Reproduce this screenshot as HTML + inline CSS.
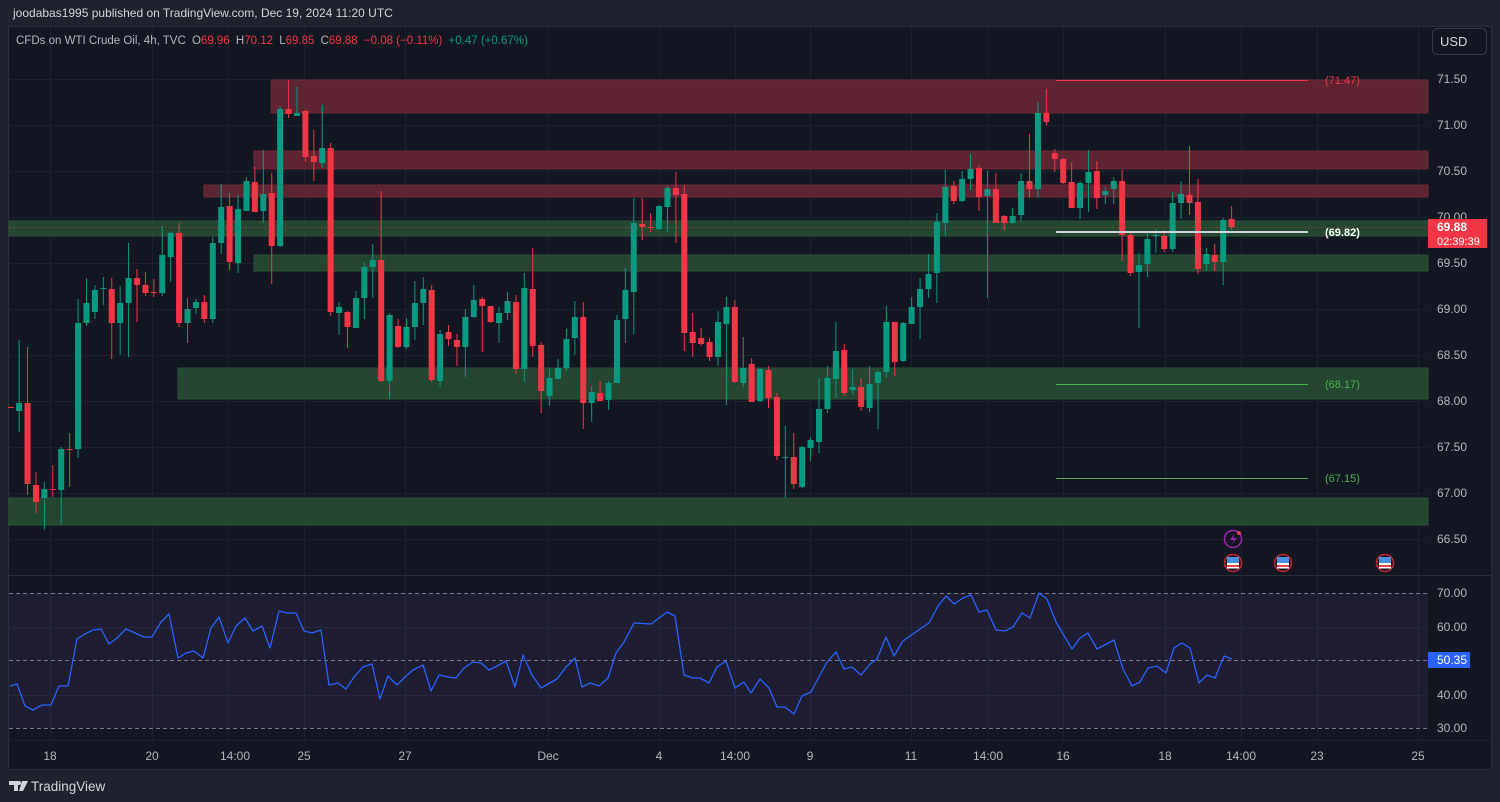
<!DOCTYPE html>
<html><head><meta charset="utf-8"><style>
html,body{margin:0;padding:0;background:#1e222d;width:1500px;height:802px;overflow:hidden;font-family:"Liberation Sans",sans-serif}
svg{position:absolute;left:0;top:0}
</style></head><body>
<svg id="s" width="1500" height="802" xmlns="http://www.w3.org/2000/svg" font-family="Liberation Sans, sans-serif">
<rect x="0" y="0" width="1500" height="802" fill="#1e222d"/>
<rect x="8.5" y="26.5" width="1483" height="743" fill="#131722" stroke="#2a2e39"/>
<rect x="1428" y="27" width="63" height="742" fill="#131722"/>
<line x1="9" y1="575.5" x2="1491" y2="575.5" stroke="#2a2e39"/>
<line x1="9" y1="740.5" x2="1491" y2="740.5" stroke="#2a2e39" stroke-opacity="0.5"/>
<g id="grid" stroke="#1e2230" stroke-width="1"></g>
<g id="zones"></g>
<rect x="9" y="593" width="1419" height="135" fill="#7e57c2" fill-opacity="0.1"/>
<g stroke="#787b86" stroke-dasharray="4,3" stroke-width="1">
<line x1="9" y1="593.5" x2="1428" y2="593.5"/><line x1="9" y1="660.5" x2="1428" y2="660.5"/><line x1="9" y1="728.5" x2="1428" y2="728.5"/>
</g>
<line x1="9" y1="227.5" x2="1428" y2="227.5" stroke="#f23645" stroke-dasharray="1,3" stroke-opacity="0.8"/>
<g id="candles"></g>
<polyline id="rsi" fill="none" stroke="#2962ff" stroke-width="1.3" stroke-linejoin="round"/>
<line x1="1056" y1="80.5" x2="1308" y2="80.5" stroke="#f23645"/>
<line x1="1056" y1="232" x2="1308" y2="232" stroke="#d1d4dc" stroke-width="2"/>
<line x1="1056" y1="384.5" x2="1308" y2="384.5" stroke="#4caf50"/>
<line x1="1056" y1="478.5" x2="1308" y2="478.5" stroke="#4caf50"/>
<g font-size="11">
<text x="1325" y="84" fill="#f23645">(71.47)</text>
<text x="1325" y="236" fill="#ffffff" font-weight="bold">(69.82)</text>
<text x="1325" y="388" fill="#4caf50">(68.17)</text>
<text x="1325" y="482" fill="#4caf50">(67.15)</text>
</g>
<text x="13" y="17" fill="#d1d4dc" font-size="12">joodabas1995 published on TradingView.com, Dec 19, 2024 11:20 UTC</text>
<text x="16" y="44" font-size="11.5" fill="#b2b5be">CFDs on WTI Crude Oil, 4h, TVC <tspan dx="3">O</tspan><tspan fill="#f23645">69.96</tspan> <tspan dx="3">H</tspan><tspan fill="#f23645">70.12</tspan> <tspan dx="3">L</tspan><tspan fill="#f23645">69.85</tspan> <tspan dx="3">C</tspan><tspan fill="#f23645">69.88</tspan> <tspan dx="3" fill="#f23645">−0.08 (−0.11%)</tspan> <tspan dx="3" fill="#089981">+0.47 (+0.67%)</tspan></text>
<rect x="1432.5" y="28.5" width="54" height="26" rx="5" fill="#131722" stroke="#363a45"/>
<text x="1440" y="46" fill="#d1d4dc" font-size="13">USD</text>
<g id="paxis" font-size="12" fill="#b2b5be"></g>
<rect x="1428" y="219" width="59" height="29" fill="#f23645"/>
<text x="1437" y="231" fill="#fff" font-size="12" font-weight="bold">69.88</text>
<text x="1437" y="245" fill="#fff" font-size="11">02:39:39</text>
<g font-size="12" fill="#b2b5be">
<text x="1437" y="597">70.00</text><text x="1437" y="631">60.00</text><text x="1437" y="699">40.00</text><text x="1437" y="732">30.00</text>
</g>
<rect x="1428" y="652" width="42" height="16" fill="#2962ff"/>
<text x="1437" y="664" fill="#fff" font-size="12">50.35</text>
<g id="taxis" font-size="12" fill="#b2b5be" text-anchor="middle"></g>
<g>
<circle cx="1233" cy="539" r="8.5" fill="#131722" stroke="#9c27b0" stroke-width="1.5"/>
<path d="M1235 533 L1230 540 L1234 540 L1231 545 L1237 538 L1233 538 Z" fill="#9c27b0"/>
<circle cx="1239" cy="533" r="2" fill="#f23645"/>
</g>
<g id="flags"></g>
<g transform="translate(9,779)">
<path d="M0 2 H9 V12 H5 V6 H0 Z M10 2 A2 2 0 1 1 10 6 A2 2 0 1 1 10 2 Z M13 2 H19 L14 12 H10 Z" fill="#d1d4dc"/>
<text x="22" y="12" fill="#d1d4dc" font-size="13.5">TradingView</text>
</g>
</svg>
<script>
var NS="http://www.w3.org/2000/svg";
function el(p,t,a,txt){var e=document.createElementNS(NS,t);for(var k in a)e.setAttribute(k,a[k]);if(txt!=null)e.textContent=txt;p.appendChild(e);return e;}
var grid=document.getElementById('grid');
[50,152,228,304,405,548,659,735,810,911,988,1063,1165,1241,1317,1418].forEach(function(x){el(grid,'line',{x1:x+.5,y1:27,x2:x+.5,y2:740});});
for(var k=0;k<11;k++){var y=79+k*46;el(grid,'line',{x1:9,y1:y+.5,x2:1428,y2:y+.5});}
[627,695].forEach(function(y){el(grid,'line',{x1:9,y1:y+.5,x2:1428,y2:y+.5});});
var pa=document.getElementById('paxis');
['71.50','71.00','70.50','70.00','69.50','69.00','68.50','68.00','67.50','67.00','66.50'].forEach(function(t,i){el(pa,'text',{x:1437,y:83+i*46},t);});
var ta=document.getElementById('taxis');
[[50,'18'],[152,'20'],[235,'14:00'],[304,'25'],[405,'27'],[548,'Dec'],[659,'4'],[735,'14:00'],[810,'9'],[911,'11'],[988,'14:00'],[1063,'16'],[1165,'18'],[1241,'14:00'],[1317,'23'],[1418,'25']].forEach(function(a){el(ta,'text',{x:a[0],y:760},a[1]);});
var z=document.getElementById('zones');
[[271,80,113,'r'],[254,151,169,'r'],[204,185,197,'r'],[9,221,236,'g'],[254,255,271,'g'],[178,368,399,'g'],[9,498,525,'g']].forEach(function(a){
el(z,'rect',{x:a[0],y:a[1],width:1428-a[0],height:a[2]-a[1],fill:a[3]=='r'?'#5e2432':'#254630',stroke:a[3]=='r'?'#6e2a38':'#2b5236'});});
var C=[[407,408,407,408,'r'],[403,411,340,432,'g'],[403,484,347,495,'r'],[485,502,472,513,'r'],[489,498,482,530,'g'],[489,490,465,497,'r'],[449,490,447,524,'g'],[449,450,433,487,'r'],[323,449,299,458,'g'],[303,323,278,326,'g'],[290,312,285,319,'g'],[288,289,277,305,'g'],[289,323,278,359,'r'],[303,323,286,355,'g'],[278,303,243,357,'g'],[278,285,269,322,'r'],[285,293,272,296,'r'],[292,293,279,297,'r'],[255,293,226,296,'g'],[233,257,232,282,'g'],[233,323,223,327,'r'],[309,323,298,343,'g'],[302,308,299,314,'g'],[302,319,295,323,'r'],[243,319,237,323,'g'],[207,243,184,254,'g'],[206,262,193,270,'r'],[209,263,195,273,'g'],[181,211,177,211,'g'],[182,212,167,212,'r'],[194,211,150,223,'g'],[193,246,173,284,'r'],[109,246,106,247,'g'],[109,114,80,118,'r'],[113,116,87,116,'g'],[111,157,110,162,'r'],[156,162,130,181,'r'],[148,163,105,168,'g'],[148,312,143,316,'r'],[307,313,302,335,'g'],[312,327,311,348,'r'],[298,328,291,328,'g'],[267,298,262,319,'g'],[260,267,244,298,'g'],[260,381,191,382,'r'],[315,381,313,399,'g'],[326,347,319,348,'r'],[327,347,318,349,'g'],[303,327,281,340,'g'],[289,303,277,325,'g'],[290,380,285,382,'r'],[334,381,330,387,'g'],[332,339,325,346,'r'],[340,347,334,366,'r'],[317,347,309,377,'g'],[300,317,285,318,'g'],[299,306,297,352,'r'],[306,322,306,323,'r'],[313,323,307,343,'g'],[301,313,292,320,'g'],[302,369,295,374,'r'],[288,369,273,382,'g'],[289,346,248,357,'r'],[345,391,342,413,'r'],[378,396,369,406,'g'],[368,379,359,379,'g'],[339,368,329,371,'g'],[317,338,301,355,'g'],[317,403,302,429,'r'],[392,403,386,422,'g'],[393,401,381,401,'r'],[383,400,381,410,'g'],[320,383,315,383,'g'],
[290,319,268,343,'g'],[223,292,198,334,'g'],[224,227,198,240,'r'],[227,228,213,232,'r'],[206,229,205,230,'g'],[188,207,186,232,'g'],[188,195,172,243,'r'],[194,333,185,351,'r'],[332,343,313,357,'r'],[338,344,328,346,'r'],[342,357,338,361,'r'],[322,357,311,366,'g'],[307,324,297,405,'g'],[307,382,300,383,'r'],[368,383,337,387,'g'],[364,402,358,402,'r'],[369,401,368,402,'g'],[370,398,366,408,'r'],[397,456,393,460,'r'],[457,458,426,498,'g'],[457,484,433,489,'r'],[447,487,446,488,'g'],[440,448,437,461,'g'],[409,442,378,453,'g'],[378,409,366,413,'g'],[351,379,322,398,'g'],[350,393,344,396,'r'],[387,390,369,395,'g'],[387,407,378,411,'r'],[384,408,366,412,'g'],[372,383,370,429,'g'],[322,372,306,378,'g'],[322,362,322,376,'r'],[323,361,322,362,'g'],[307,324,297,324,'g'],[289,307,278,339,'g'],[274,289,254,298,'g'],[222,273,213,303,'g'],[187,223,170,236,'g'],[186,201,181,204,'r'],[179,201,171,202,'g'],[169,179,154,190,'g'],[168,197,165,211,'r'],[189,196,171,298,'g'],[189,223,173,223,'r'],[216,223,215,230,'r'],[216,223,208,224,'g'],[181,215,173,221,'g'],[181,189,134,198,'r'],[113,189,102,198,'g'],[113,122,89,125,'r'],[153,159,149,172,'r'],[159,183,158,184,'r'],[182,208,162,208,'r'],[183,208,181,219,'g'],[172,183,150,212,'g'],[171,198,161,209,'r'],[191,195,187,204,'g'],[181,189,177,204,'g'],[181,235,170,261,'r'],[235,273,232,276,'r'],[265,272,253,328,'g'],[239,264,231,277,'g'],[235,236,229,253,'g'],[236,249,230,252,'r'],[203,249,192,252,'g'],[194,203,181,219,'g'],[195,203,146,215,'r'],[202,269,179,274,'r'],[254,264,248,271,'g'],[255,262,244,271,'r'],[220,262,218,285,'g'],[219,227,206,230,'r']];
var cg=document.getElementById('candles');
C.forEach(function(c,i){var x=10.7+i*8.42;var col=c[4]=='g'?'#089981':'#f23645';
el(cg,'line',{x1:x,y1:c[2],x2:x,y2:c[3],stroke:col,'stroke-width':1});
el(cg,'rect',{x:x-3,y:c[0],width:6,height:Math.max(1,c[1]-c[0]),fill:col});});
var R="10,686 17,684 25,706 33,710 42,705 51,705 59,686 68,686 77,639 85,634 93,630 101,629 109,644 117,638 126,629 135,633 144,637 152,637 161,622 169,614 178,658 186,653 194,651 203,658 211,628 219,617 228,643 236,626 245,618 253,631 262,626 270,648 279,611 287,613 296,613 304,631 312,633 321,630 329,685 338,683 346,689 354,677 363,667 372,664 380,699 388,676 397,685 405,677 413,670 423,665 431,691 439,675 448,677 456,678 464,668 473,662 481,663 489,670 497,666 506,661 515,687 523,655 532,675 541,688 557,679 566,667 575,658 582,687 590,683 599,686 608,678 616,653 624,642 634,623 651,624 659,618 667,612 675,616 684,675 693,678 700,678 709,683 717,667 726,661 735,688 744,682 751,693 760,679 769,688 777,707 785,707 794,714 802,696 811,692 827,662 836,652 844,669 852,667 861,675 870,664 877,659 886,637 894,656 903,641 920,629 929,623 938,606 946,596 954,604 963,598 971,595 979,612 987,610 996,630 1005,631 1013,627 1022,613 1030,618 1039,593 1047,599 1056,622 1072,649 1080,638 1088,633 1097,649 1114,640 1123,669 1132,686 1140,682 1148,668 1157,666 1166,673 1174,648 1182,643 1190,648 1199,683 1207,675 1215,678 1224,656 1232,659";
document.getElementById('rsi').setAttribute('points',R);
var fg=document.getElementById('flags');
[1233,1283,1385].forEach(function(x){
el(fg,'circle',{cx:x,cy:563,r:8.5,fill:'#131722',stroke:'#c62838','stroke-width':1.5});
el(fg,'rect',{x:x-6,y:557,width:12,height:6,fill:'#4a90e2'});
el(fg,'rect',{x:x-6,y:563,width:12,height:2,fill:'#ffffff'});
el(fg,'rect',{x:x-6,y:565,width:12,height:2,fill:'#e94545'});
el(fg,'rect',{x:x-6,y:567,width:12,height:1.5,fill:'#ffffff'});});
</script>
</body></html>
